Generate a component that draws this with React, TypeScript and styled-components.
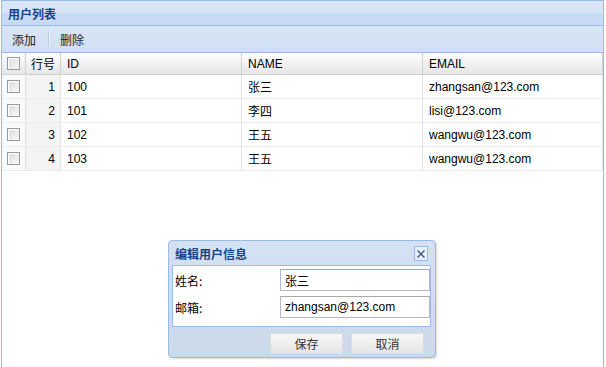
import React from "react";
import styled, { createGlobalStyle } from "styled-components";

const Global = createGlobalStyle`
  html, body { margin: 0; padding: 0; background: #fff; }
  body { font-family: "Liberation Sans", Arial, "Noto Sans CJK SC", sans-serif; font-size: 12px; color: #000; }
`;

const Page = styled.div`
  position: relative;
  width: 606px;
  height: 367px;
  overflow: hidden;
`;

const Panel = styled.div`
  margin-left: 1px;
  width: 601px;
  height: 367px;
  border-left: 1px solid #99bbe8;
  border-right: 1px solid #99bbe8;
  border-top: 1px solid #99bbe8;
  display: flex;
  flex-direction: column;
  background: #fff;
`;

const TitleBar = styled.div`
  height: 24px;
  display: flex;
  align-items: center;
  padding-left: 6px;
  background: linear-gradient(#dce8f8 0%, #d6e4f6 45%, #c7daf4 55%, #c9dbf4 100%);
  border-bottom: 1px solid #99bbe8;
  font-weight: bold;
  color: #15428b;
  font-family: "Noto Sans CJK SC", sans-serif;
  font-size: 12px;
`;

const Toolbar = styled.div`
  height: 26px;
  display: flex;
  align-items: center;
  padding-left: 9px;
  background: linear-gradient(#d9e6f6, #d0dff3);
  border-bottom: 1px solid #99bbe8;
  font-family: "Noto Sans CJK SC", sans-serif;
  color: #222;
`;

const ToolButton = styled.span`
  padding: 0 1px;
`;

const ToolSep = styled.span`
  width: 1px;
  height: 16px;
  background: #b7cbe6;
  border-right: 1px solid #eef4fb;
  margin: 0 9px 0 11px;
`;

const Grid = styled.div`
  display: grid;
  grid-template-columns: 24px 35px 181px 181px 180px;
`;

const HeadCell = styled.div<{ $center?: boolean; $cjk?: boolean }>`
  height: 22px;
  display: flex;
  align-items: center;
  justify-content: ${(p) => (p.$center ? "center" : "flex-start")};
  padding-left: ${(p) => (p.$center ? "0" : "6px")};
  background: linear-gradient(#ffffff, #f1f1f1 50%, #e7e7e7);
  border-right: 1px solid #d0d0d0;
  border-bottom: 1px solid #d0d0d0;
  font-family: ${(p) =>
    p.$cjk ? '"Noto Sans CJK SC", sans-serif' : '"Liberation Sans", Arial, sans-serif'};
  font-size: 12px;
  color: #000;
  box-sizing: border-box;
`;

const Cell = styled.div<{ $kind?: "check" | "num" | "text" }>`
  height: 24px;
  display: flex;
  align-items: center;
  box-sizing: border-box;
  border-right: 1px solid #e2e2e2;
  border-bottom: 1px solid #ececec;
  padding-left: ${(p) => (p.$kind === "text" ? "6px" : "0")};
  padding-right: ${(p) => (p.$kind === "num" ? "5px" : "0")};
  justify-content: ${(p) =>
    p.$kind === "check" ? "center" : p.$kind === "num" ? "flex-end" : "flex-start"};
  background: ${(p) => (p.$kind === "num" ? "#f4f4f4" : p.$kind === "check" ? "#fafafa" : "#fff")};
  font-family: "Liberation Sans", Arial, "Noto Sans CJK SC", sans-serif;
  font-size: 12px;
  color: #000;
`;

const Check = styled.span`
  width: 11px;
  height: 11px;
  border: 1px solid #999;
  background: linear-gradient(135deg, #dcdcdc, #f8f8f8);
  box-shadow: inset 1px 1px 0 #fff;
  display: block;
`;

const Dialog = styled.div`
  position: absolute;
  left: 168px;
  top: 240px;
  width: 268px;
  height: 118px;
  border: 1px solid #99bbe8;
  border-radius: 4px;
  background: linear-gradient(#d3e1f3, #cbd9ea);
  box-shadow: 1px 1px 2px rgba(0, 0, 0, 0.15);
  display: flex;
  flex-direction: column;
  padding: 0 4px 0 3px;
  box-sizing: border-box;
`;

const DialogHead = styled.div`
  height: 23px;
  display: flex;
  align-items: center;
  justify-content: space-between;
  padding: 0 3px 0 3px;
  margin-top: 1px;
  font-weight: bold;
  color: #15428b;
  font-family: "Noto Sans CJK SC", sans-serif;
  font-size: 12px;
`;

const CloseBtn = styled.span`
  width: 12px;
  height: 13px;
  border: 1px solid #99bbe8;
  background: #e8f0fb;
  display: flex;
  align-items: center;
  justify-content: center;
`;

const DialogBody = styled.div`
  height: 58px;
  background: #fff;
  border: 1px solid #99bbe8;
  display: flex;
  flex-direction: column;
  gap: 3px;
  padding-top: 2px;
  box-sizing: content-box;
`;

const FormRow = styled.div`
  display: flex;
  align-items: center;
  height: 24px;
`;

const Label = styled.span`
  width: 105px;
  padding-left: 2px;
  font-family: "Noto Sans CJK SC", sans-serif;
  font-size: 12px;
  color: #000;
`;

const Input = styled.div`
  flex: 1;
  height: 22px;
  border: 1px solid #b5b8c8;
  border-top-color: #a9a9a9;
  display: flex;
  align-items: center;
  padding-left: 4px;
  background: #fff;
  font-family: "Liberation Sans", Arial, "Noto Sans CJK SC", sans-serif;
  font-size: 12px;
  color: #000;
  box-sizing: border-box;
`;

const ButtonBar = styled.div`
  display: flex;
  justify-content: flex-end;
  gap: 8px;
  padding: 6px 7px 0 0;
`;

const Button = styled.span`
  width: 73px;
  height: 21px;
  display: flex;
  align-items: center;
  justify-content: center;
  background: linear-gradient(#f6f6f6, #e6e6e6);
  border: 1px solid #dcdcdc;
  box-sizing: border-box;
  font-family: "Noto Sans CJK SC", sans-serif;
  font-size: 12px;
  color: #333;
`;

const rows = [
  { n: 1, id: "100", name: "张三", email: "zhangsan@123.com" },
  { n: 2, id: "101", name: "李四", email: "lisi@123.com" },
  { n: 3, id: "102", name: "王五", email: "wangwu@123.com" },
  { n: 4, id: "103", name: "王五", email: "wangwu@123.com" },
];

export default function App() {
  return (
    <Page>
      <Global />
      <Panel>
        <TitleBar>用户列表</TitleBar>
        <Toolbar>
          <ToolButton>添加</ToolButton>
          <ToolSep />
          <ToolButton>删除</ToolButton>
        </Toolbar>
        <Grid>
          <HeadCell $center>
            <Check />
          </HeadCell>
          <HeadCell $center $cjk>
            行号
          </HeadCell>
          <HeadCell>ID</HeadCell>
          <HeadCell>NAME</HeadCell>
          <HeadCell>EMAIL</HeadCell>
          {rows.map((r) => (
            <React.Fragment key={r.n}>
              <Cell $kind="check">
                <Check />
              </Cell>
              <Cell $kind="num">{r.n}</Cell>
              <Cell $kind="text">{r.id}</Cell>
              <Cell $kind="text">{r.name}</Cell>
              <Cell $kind="text">{r.email}</Cell>
            </React.Fragment>
          ))}
        </Grid>
      </Panel>
      <Dialog>
        <DialogHead>
          编辑用户信息
          <CloseBtn>
            <svg width="10" height="10" viewBox="0 0 10 10">
              <path d="M1.5 1.5 L8.5 8.5 M8.5 1.5 L1.5 8.5" stroke="#3b5a82" strokeWidth="1.4" />
            </svg>
          </CloseBtn>
        </DialogHead>
        <DialogBody>
          <FormRow>
            <Label>姓名:</Label>
            <Input>张三</Input>
          </FormRow>
          <FormRow>
            <Label>邮箱:</Label>
            <Input>zhangsan@123.com</Input>
          </FormRow>
        </DialogBody>
        <ButtonBar>
          <Button>保存</Button>
          <Button>取消</Button>
        </ButtonBar>
      </Dialog>
    </Page>
  );
}
